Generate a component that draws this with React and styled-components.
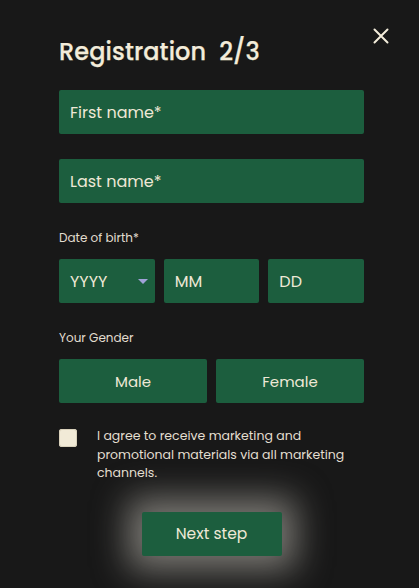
import React, { useState } from "react";
import styled, { createGlobalStyle } from "styled-components";

const Global = createGlobalStyle`
  html, body { margin: 0; padding: 0; background: #171717; }
  body { font-family: "Poppins", "Inter", "Open Sans", sans-serif; color: #f2ecdb; }
  * { box-sizing: border-box; }
`;

const Page = styled.div`
  position: relative;
  width: 419px;
  height: 588px;
  background: #181818;
  overflow: hidden;
`;

const Close = styled.button`
  position: absolute;
  top: 26px;
  right: 28px;
  width: 20px;
  height: 20px;
  padding: 0;
  border: 0;
  background: transparent;
  cursor: pointer;
  display: flex;
  align-items: center;
  justify-content: center;
`;

const Form = styled.div`
  width: 305px;
  margin-left: 59px;
  padding-top: 35px;
  display: flex;
  flex-direction: column;
`;

const Title = styled.h1`
  margin: 0 0 21px;
  font-size: 24px;
  line-height: 34px;
  font-weight: 500;
  letter-spacing: 0.1px;
  color: #f3ecda;
  -webkit-text-stroke: 0.25px #f3ecda;
`;

const Step = styled.span`
  margin-left: 13px;
`;

const Field = styled.div`
  height: 44px;
  background: #1c5e3e;
  border-radius: 2px;
  display: flex;
  align-items: center;
  padding: 0 11px;
  font-size: 16px;
  color: #eee8d6;
  position: relative;
  margin-bottom: ${(p) => p.$mb || 0}px;
`;

const Label = styled.div`
  font-size: 12px;
  line-height: 16px;
  color: #e2ddcf;
  margin: ${(p) => p.$mt || 0}px 0 13px;
`;

const Row = styled.div`
  display: grid;
  grid-template-columns: repeat(${(p) => p.$cols}, 1fr);
  gap: 9px;
`;

const Arrow = styled.span`
  position: absolute;
  right: 7px;
  top: 20px;
  width: 0;
  height: 0;
  border-left: 5px solid transparent;
  border-right: 5px solid transparent;
  border-top: 5px solid #a0a2d8;
`;

const Choice = styled.button`
  height: 44px;
  border: 0;
  border-radius: 2px;
  background: #1c5e3e;
  color: #eee8d6;
  font-family: inherit;
  font-size: 15px;
  cursor: pointer;
`;

const Agree = styled.label`
  display: flex;
  align-items: flex-start;
  gap: 20px;
  margin-top: 26px;
  cursor: pointer;
`;

const Box = styled.span`
  flex: 0 0 auto;
  width: 18px;
  height: 18px;
  border-radius: 3px;
  background: #f1ead7;
  box-shadow: inset 0 0 0 1px #d9d1bb;
`;

const AgreeText = styled.span`
  font-size: 12.5px;
  line-height: 18.5px;
  color: #e4dfd1;
  margin-top: -2px;
`;

const Submit = styled.button`
  align-self: center;
  margin-top: 29px;
  width: 140px;
  height: 44px;
  border: 0;
  border-radius: 2px;
  background: #1c5e3e;
  color: #eee8d6;
  font-family: inherit;
  font-size: 15.5px;
  cursor: pointer;
  box-shadow: 0 0 34px 14px rgba(220, 215, 205, 0.5);
`;

export default function App() {
  const [agree, setAgree] = useState(false);
  return (
    <Page>
      <Global />
      <Close aria-label="Close">
        <svg width="16" height="16" viewBox="0 0 16 16">
          <path d="M1.5 1.5 L14.5 14.5 M14.5 1.5 L1.5 14.5" stroke="#f3ecda" strokeWidth="2" strokeLinecap="round" />
        </svg>
      </Close>
      <Form>
        <Title>
          Registration<Step>2/3</Step>
        </Title>
        <Field $mb={25}>First name*</Field>
        <Field>Last name*</Field>
        <Label $mt={27}>Date of birth*</Label>
        <Row $cols={3}>
          <Field>
            YYYY
            <Arrow />
          </Field>
          <Field>MM</Field>
          <Field>DD</Field>
        </Row>
        <Label $mt={27}>Your Gender</Label>
        <Row $cols={2}>
          <Choice>Male</Choice>
          <Choice>Female</Choice>
        </Row>
        <Agree onClick={() => setAgree(!agree)}>
          <Box />
          <AgreeText>
            I agree to receive marketing and promotional materials via all marketing channels.
          </AgreeText>
        </Agree>
        <Submit>Next step</Submit>
      </Form>
    </Page>
  );
}
